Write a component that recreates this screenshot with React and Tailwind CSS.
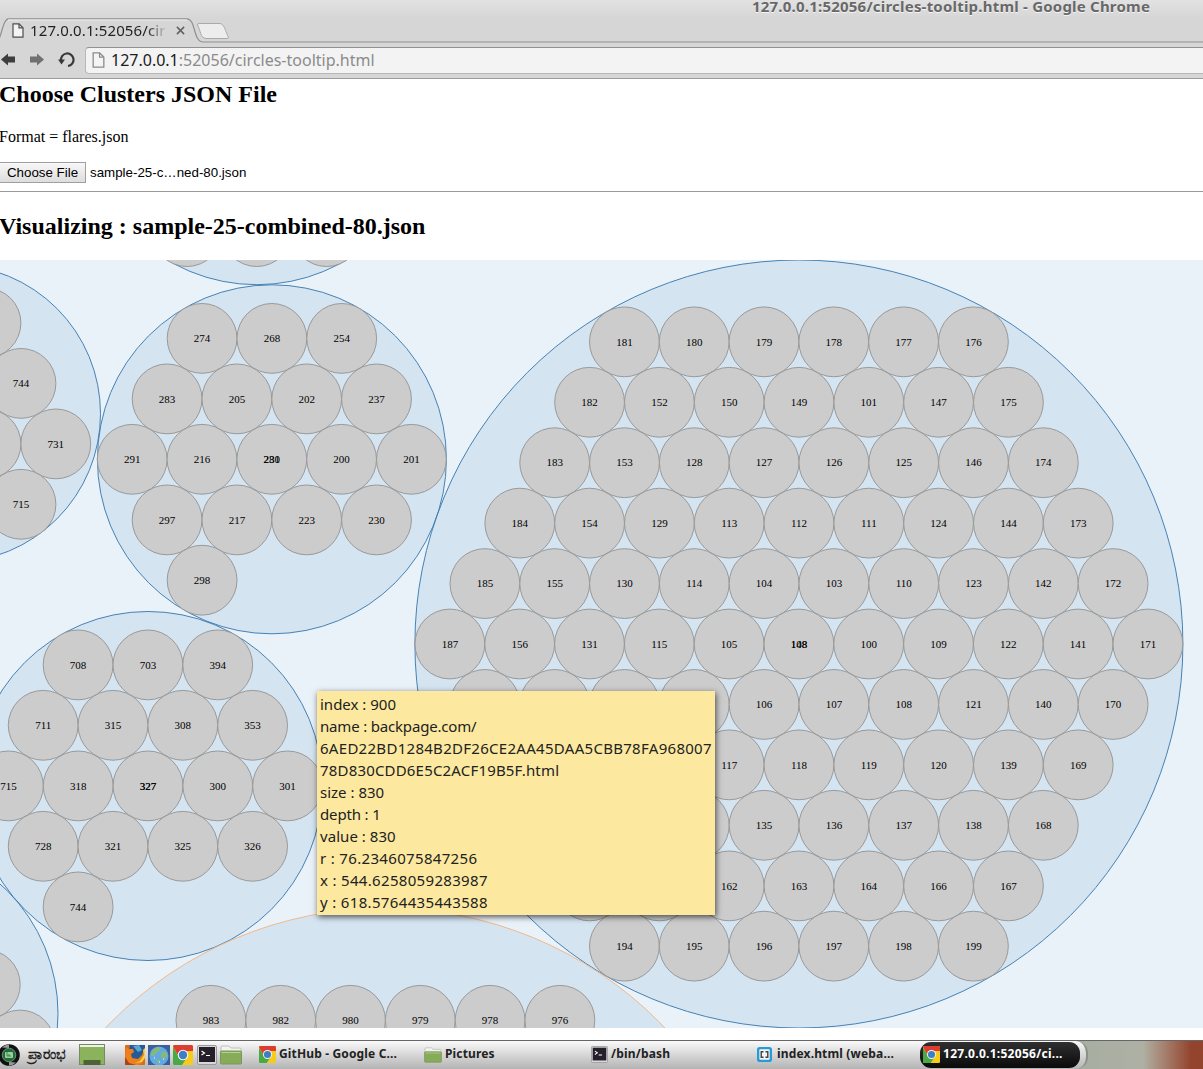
import React from "react";

const STEP = 69.8;
const RISE = 60.43;

const clusters = [
  { x: -48.3, y: 413.7, r: 148.8 },
  { x: 256.8, y: 110.2, r: 174.5 },
  { x: 271.9, y: 459.3, r: 174.5 },
  { x: 148, y: 786, r: 174.5 },
  { x: -116.5, y: 1013.7, r: 174.5 },
  { x: 798.9, y: 644, r: 384 },
  { x: 385.2, y: 1295, r: 386.8, hot: true },
];

// Each row: first centre x, centre y, labels from left to right.
const rows = [
  [-14, 323, [""]],
  [21, 383.4, ["744"]],
  [-14, 443.9, ["", "731"]],
  [21, 504.3, ["715"]],
  [187, 231.6, ["", "", ""]],
  [202.1, 338.4, ["274", "268", "254"]],
  [167.1, 398.9, ["283", "205", "202", "237"]],
  [132.2, 459.3, ["291", "216", "280|231", "200", "201"]],
  [167.1, 519.9, ["297", "217", "223", "230"]],
  [202.1, 580.2, ["298"]],
  [78.1, 664.9, ["708", "703", "394"]],
  [43.2, 725.3, ["711", "315", "308", "353"]],
  [8.4, 785.9, ["715", "318", "327|327", "300", "301"]],
  [43.2, 846.3, ["728", "321", "325", "326"]],
  [78.1, 906.9, ["744"]],
  [-14.7, 984.5, [""]],
  [20, 1045, [""]],
  [624.4, 644 - 5 * RISE, ["181", "180", "179", "178", "177", "176"]],
  [589.6, 644 - 4 * RISE, ["182", "152", "150", "149", "101", "147", "175"]],
  [554.7, 644 - 3 * RISE, ["183", "153", "128", "127", "126", "125", "146", "174"]],
  [519.8, 644 - 2 * RISE, ["184", "154", "129", "113", "112", "111", "124", "144", "173"]],
  [484.9, 644 - RISE, ["185", "155", "130", "114", "104", "103", "110", "123", "142", "172"]],
  [449.9, 644, ["187", "156", "131", "115", "105", "148|108", "100", "109", "122", "141", "171"]],
  [484.9, 644 + RISE, ["", "", "", "", "106", "107", "108", "121", "140", "170"]],
  [519.8, 644 + 2 * RISE, ["", "", "", "117", "118", "119", "120", "139", "169"]],
  [554.7, 644 + 3 * RISE, ["", "", "", "135", "136", "137", "138", "168"]],
  [589.6, 885.9, ["", "", "162", "163", "164", "166", "167"]],
  [624.4, 644 + 5 * RISE, ["194", "195", "196", "197", "198", "199"]],
  [210.9, 1020.3, ["983", "982", "980", "979", "978", "976"]],
];

function BubbleChart() {
  return (
    <svg viewBox="0 260 1203 768" className="block h-[768px] w-[1203px] bg-[#e9f1f9] font-['Liberation_Serif',serif] text-[11px]">
      {clusters.map((c, i) => (
        <circle key={i} cx={c.x} cy={c.y} r={c.r} fill="#1f77b4" fillOpacity="0.1" stroke={c.hot ? "#f2b98a" : "#4682b4"} />
      ))}
      {rows.map(([x0, y, labels], i) =>
        labels.map((label, j) => (
          <g key={i + "-" + j} transform={`translate(${x0 + j * STEP},${y})`}>
            <circle r="34.9" fill="#ccc" stroke="#999" />
            {label.split("|").map((t, k) => (
              <text key={k} textAnchor="middle" y="3.7">{t}</text>
            ))}
          </g>
        ))
      )}
    </svg>
  );
}

function Page({ className }) {
  return (
    <svg viewBox="0 0 12 15" className={className}>
      <path d="M1 .8h6l4 4v9.4H1z" fill="#f4f4f4" stroke="currentColor" strokeWidth="1.2" />
      <path d="M7 .8v4h4" fill="none" stroke="currentColor" strokeWidth="1.2" />
    </svg>
  );
}

function Chrome({ className }) {
  return (
    <svg viewBox="0 0 20 20" className={className}>
      <rect width="20" height="20" rx="1.5" fill="#f6cb1c" />
      <path d="M0 1.500Q0 0 1.500 0H18.500Q20 0 20 1.500V6H10L6 12z" fill="#dd3d31" />
      <path d="M0 2L6 12l7 2-4 6H1.500Q0 20 0 18.500z" fill="#4aa847" />
      <circle cx="10" cy="10" r="5.300" fill="#f4f4f4" />
      <circle cx="10" cy="10" r="4.200" fill="#3d7fc4" />
    </svg>
  );
}

function Folder({ className }) {
  return (
    <svg viewBox="0 0 22 20" className={className}>
      <path d="M1 8V2Q1 1 2 1H9l2 2h9Q21 3 21 4V8z" fill="#f2f2f0" stroke="#b5b5ae" strokeWidth=".8" />
      <rect x=".5" y="6" width="21" height="13" rx="1" fill="#86ac57" stroke="#7d9463" />
      <path d="M1.500 7.500h19" stroke="#b7d18f" />
    </svg>
  );
}

function Terminal({ className }) {
  return (
    <svg viewBox="0 0 20 20" className={className}>
      <rect x=".5" y=".5" width="19" height="19" rx="1.500" fill="#d8d8d8" stroke="#999" />
      <rect x="2" y="2" width="16" height="15" fill="#241f2b" />
      <path d="M4.500 6l3 2-3 2M9 10.500h4" fill="none" stroke="#fff" strokeWidth="1.200" />
    </svg>
  );
}

function MenuLogo() {
  return (
    <svg viewBox="0 0 22 22" className="-ml-0.5 block size-[22px] shrink-0">
      <circle cx="11" cy="11" r="10.800" fill="#111" />
      <path d="M4 3.500A10.500 10.500 0 0 1 11 .5V4zM18 18.500a10.500 10.500 0 0 1-7 3V18z" fill="#999" />
      <circle cx="11" cy="11" r="6.800" fill="#1f6b3c" stroke="#7fa38a" strokeWidth=".8" />
      <rect x="7" y="8" width="8" height="6" rx="1" fill="#9ccf98" />
      <path d="M9 8v4h4M11 10v2" fill="none" stroke="#2b7445" strokeWidth=".8" />
    </svg>
  );
}

function Firefox() {
  return (
    <svg viewBox="0 0 20 20" className="block size-5 shrink-0">
      <rect width="20" height="20" rx="1" fill="#d96c18" />
      <path d="M5 0h15v10l-4 5-8 1-5-7z" fill="#245b95" />
      <path d="M8 1l6-1 3 5-4 2z" fill="#5ba5d2" />
      <path d="M1 2l3 2 4 0 1 3-3 2 1 4 6 1 4-4 2-5 1 6-3 7-6 3-6-2-5-6z" fill="#ee7f1b" />
      <path d="M18 5l1 5-4 6-5 2 7-1 3-4V3z" fill="#f9cf3e" />
      <path d="M0 12l4 6 7 2H1Q0 20 0 19z" fill="#a8431a" />
    </svg>
  );
}

function Globe() {
  return (
    <svg viewBox="0 0 22 20" className="block h-5 w-[22px] shrink-0">
      <rect width="22" height="20" fill="#3a5f9b" />
      <circle cx="11" cy="11" r="9.500" fill="#60a9e4" />
      <path d="M4 6l5-4 4 1-2 3-3 2-2 4-3-2zM13 8l4-2 3 5-4 3-3-2zM8 14l4 1-2 4z" fill="#86b978" />
      <path d="M6 13h1M15 14h1M11 17h1" stroke="#fff" strokeWidth="1.200" />
    </svg>
  );
}

function Desktop() {
  return (
    <svg viewBox="0 0 26 22" className="block h-[22px] w-[26px] shrink-0">
      <rect x=".5" y=".5" width="25" height="20" fill="#8ab35c" stroke="#768b60" />
      <path d="M1 2h24" stroke="#f0f0ec" strokeWidth="2" />
      <rect x="4.500" y="16" width="17" height="5" fill="#4e6137" />
    </svg>
  );
}

const details = [
  ["index : 900", "tracking-[0px]"],
  ["name : backpage.com/", "tracking-[-0.18px]"],
  ["6AED22BD1284B2DF26CE2AA45DAA5CBB78FA968007", "tracking-[0.29px]"],
  ["78D830CDD6E5C2ACF19B5F.html", "tracking-[0.18px]"],
  ["size : 830", "tracking-[0px]"],
  ["depth : 1", "tracking-[-0.15px]"],
  ["value : 830", "tracking-[0.05px]"],
  ["r : 76.2346075847256", "tracking-[0.33px]"],
  ["x : 544.6258059283987", "tracking-[0.32px]"],
  ["y : 618.5764435443588", "tracking-[0.34px]"],
];

function Browser() {
  return (
    <header className="h-[79px] border-b border-[#9c9c9c] bg-[#d6d6d6] font-['Noto_Sans',sans-serif]">
      <div className="flex h-[18px] items-start bg-linear-to-b from-[#e2e2e2] to-[#d6d6d6] pl-[752px]">
        <div className="-mt-1 text-[15px] leading-5 font-bold tracking-[0.21px] whitespace-nowrap text-[#686868] [text-shadow:0_1px_0_#f5f5f5]">
          127.0.0.1:52056/circles-tooltip.html - Google Chrome
        </div>
      </div>
      <div className="relative h-[25px]">
        <svg viewBox="0 0 1203 25" className="absolute inset-0 h-[25px] w-[1203px]" fill="none">
          <path d="M-3 24C2 20 2 2 8 .8H187C196 1 193 24 203 24H1203" stroke="#909090" strokeWidth="1.200" />
          <path d="M8 2H187" stroke="#f0f0f0" />
          <path d="M199 5.500H220C225 6 226 16 228.500 19Q229 20.500 226 20.500H206C200 20 201 13 197.500 7Q197 5.500 199 5.500z" fill="#ededed" stroke="#aaa" />
        </svg>
        <div className="relative flex h-[25px] items-center pl-3">
          <Page className="block h-[15px] w-[12px] text-[#4d4d4d]" />
          <div className="-mt-0.5 ml-1.5 w-[137px] bg-linear-to-r from-[#202020] from-85% to-[#d6d6d6] bg-clip-text text-[15px] leading-6 tracking-[0.12px] whitespace-nowrap text-transparent">
            127.0.0.1:52056/cir
          </div>
          <svg viewBox="0 0 10 10" className="ml-[9px] block size-[9px]"><path d="M1 1l8 8M9 1l-8 8" stroke="#626262" strokeWidth="1.700" /></svg>
        </div>
      </div>
      <div className="flex h-[35px] items-center pb-px">
        <svg viewBox="0 0 80 20" className="-mt-0.5 block h-5 w-20 shrink-0">
          <path d="M1 10.500l7-6v3h7v6H8v3z" fill="#3d3d3d" />
          <path d="M44 10.500l-7-6v3h-7v6h7v3z" fill="#707070" />
          <path d="M61 11.500A6.300 6.300 0 1 1 68 17" fill="none" stroke="#393939" strokeWidth="2.200" />
          <path d="M58 10.500h7l-3.500 5z" fill="#393939" />
        </svg>
        <div className="ml-[5px] flex h-[27px] flex-1 items-center rounded-l-sm border border-r-0 border-[#b7b7b7] border-t-[#919191] bg-[#f3f3f3] pl-1.5">
          <Page className="block h-4 w-[13px] text-[#8b8b8b]" />
          <span className="ml-1.5 text-[16px] leading-6 text-[#8b8b8b]"><span className="text-[#202020]">127.0.0.1</span>:52056/circles-tooltip.html</span>
        </div>
      </div>
    </header>
  );
}

function Task({ icon, label, className }) {
  return (
    <div className={"flex shrink-0 items-center gap-[3px] whitespace-nowrap " + className}>
      {icon}
      <span className="-mt-0.5">{label}</span>
    </div>
  );
}

function Taskbar() {
  return (
    <footer className="flex h-[29px] border-t border-[#666] bg-linear-to-r from-[#a9aea3] from-91% via-[#aeb0a4] via-95% to-[#92442d] to-99% font-['Noto_Sans',sans-serif] text-[12px] font-bold text-[#222]">
      <div className="flex h-[28px] w-[1088px] items-center rounded-r-[12px] border-r-2 border-[#8b8f86] bg-linear-to-b from-[#fafafa] to-[#b4b4b4]">
        <MenuLogo />
        <span className="-mt-1 ml-2 w-[42px] text-[14px] font-bold whitespace-nowrap">ಪ್ರಾರಂಭ</span>
        <div className="ml-[9px] flex items-center">
          <Desktop />
          <div className="ml-5 flex items-center gap-[3px]">
            <Firefox />
            <Globe />
            <Chrome className="block size-5" />
            <Terminal className="ml-px block size-5" />
            <Folder className="block h-5 w-[22px]" />
          </div>
        </div>
        <Task className="ml-[17px] w-[165px] tracking-[0.15px]" icon={<Chrome className="-mt-px block size-[17px]" />} label="GitHub - Google C..." />
        <Task className="w-[167px] tracking-[0.15px]" icon={<Folder className="-mt-px block h-4 w-[18px]" />} label="Pictures" />
        <Task className="w-[166px] tracking-[0.2px]" icon={<Terminal className="-mt-px block size-[17px]" />} label="/bin/bash" />
        <Task
          className="w-[163px] tracking-[0.16px]"
          icon={
            <svg viewBox="0 0 16 16" className="-mt-0.5 mr-0.5 block size-[15px]">
              <rect width="16" height="16" rx="3" fill="#279bd5" />
              <rect x="2.500" y="2.500" width="11" height="11" rx="1" fill="#f5f5f5" />
              <path d="M7 5H4.500v6H7M9 5h2.500v6H9" fill="none" stroke="#444" strokeWidth="1.500" />
            </svg>
          }
          label="index.html (weba..."
        />
        <Task
          className="h-[26px] w-[160px] rounded-[11px] bg-linear-to-b from-[#303030] to-[#0b0b0b] pl-[3px] tracking-[0.28px] text-white"
          icon={<Chrome className="-mt-px block size-[17px]" />}
          label="127.0.0.1:52056/ci..."
        />
      </div>
    </footer>
  );
}

export default function App() {
  return (
    <div className="h-[1069px] w-[1203px] overflow-hidden bg-white text-black">
      <Browser />
      <main className="font-['Liberation_Serif',serif]">
        <section className="h-[113px] border-b border-[#999]">
          <h2 className="-ml-px pt-0.5 text-[24px] leading-[27px] font-bold">Choose Clusters JSON File</h2>
          <p className="mt-5 -ml-px text-[16px] leading-[18px]">Format = flares.json</p>
          <div className="mt-4 flex items-center font-['Liberation_Sans',sans-serif] text-[13.333px]">
            <button className="h-[21px] w-[86px] border border-l-0 border-[#a0a0a0] bg-linear-to-b from-[#f8f8f8] to-[#dddddd] leading-[18px]">Choose File</button>
            <span className="ml-1">sample-25-c…ned-80.json</span>
          </div>
        </section>
        <h2 className="-ml-px h-[68px] pt-[21px] text-[24px] leading-[27px] font-bold">Visualizing : sample-25-combined-80.json</h2>
        <div className="relative">
          <BubbleChart />
          <div className="absolute top-[431px] left-[317px] h-[224px] w-[398px] bg-[#fce99f] pt-0.5 pl-[3px] font-['Noto_Sans',sans-serif] text-[15px] leading-[22px] whitespace-nowrap text-[#222] shadow-[1px_2px_6px_rgba(0,0,0,0.65)]">
            {details.map(([line, spacing]) => <div key={line} className={spacing}>{line}</div>)}
          </div>
        </div>
      </main>
      <div className="h-3" />
      <Taskbar />
    </div>
  );
}
